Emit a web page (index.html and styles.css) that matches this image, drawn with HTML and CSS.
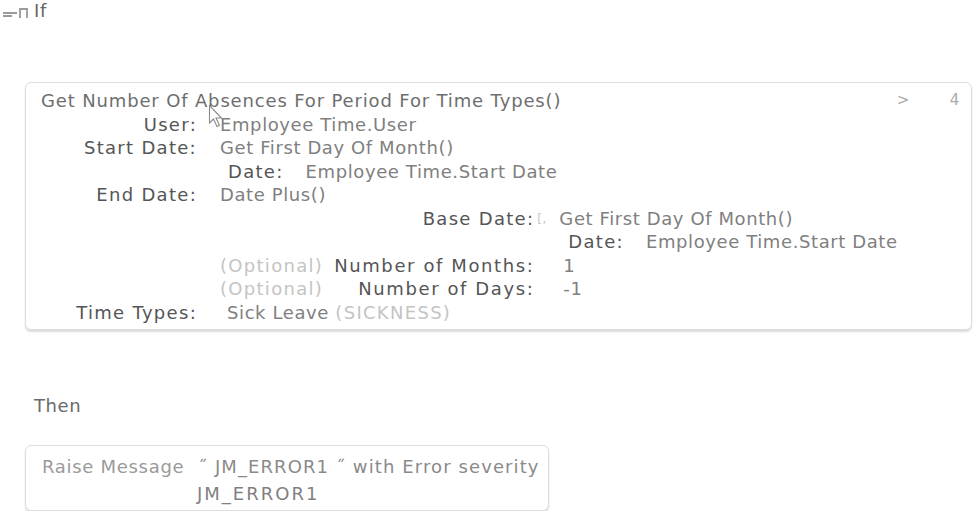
FILE: index.html
```
<!DOCTYPE html>
<html>
<head>
<meta charset="utf-8">
<link rel="stylesheet" href="styles.css">
</head>
<body>
<div class="page">
  <div class="if-head">
    <svg class="collapse" width="28" height="16" viewBox="0 0 28 16"><path d="M1 9 H15 M1 12 H10 M18 14 V5 H25 V14" fill="none" stroke="#9a9a9a" stroke-width="1.8"/></svg>
    <span class="kw">If</span>
  </div>

  <div class="card expr">
    <div class="fn-head">
      <span class="fn">Get Number Of Absences For Period For Time Types()</span>
      <span class="actions"><span class="chev">&gt;</span><span class="num">4</span></span>
    </div>
    <div class="params top">
      <div class="lbl">User:</div>
      <div class="val cursor-host">Employee Time.User
        <svg class="cursor" width="16" height="24" viewBox="0 0 16 24"><path d="M1.5 1.5 V19 L5.5 15 L9 22.5 L11.5 21.3 L8 14 H13.5 Z" fill="#fff" stroke="#8a8a8a" stroke-width="1.1"/></svg>
      </div>

      <div class="lbl">Start Date:</div>
      <div class="val">
        <div>Get First Day Of Month()</div>
        <div class="params nested n1">
          <div class="lbl">Date:</div>
          <div class="val">Employee Time.Start Date</div>
        </div>
      </div>

      <div class="lbl">End Date:</div>
      <div class="val">
        <div>Date Plus()</div>
        <div class="params nested n0">
          <div class="lbl">Base Date:</div>
          <div class="val mark-host"><span class="mark">[,</span>
            <div>Get First Day Of Month()</div>
            <div class="params nested n2">
              <div class="lbl">Date:</div>
              <div class="val">Employee Time.Start Date</div>
            </div>
          </div>

          <div class="lbl opt-row"><span class="opt">(Optional)</span><span class="opt-name">Number of Months:</span></div>
          <div class="val num-val">1</div>

          <div class="lbl opt-row"><span class="opt">(Optional)</span><span class="opt-name">Number of Days:</span></div>
          <div class="val num-val">-1</div>
        </div>
      </div>

      <div class="lbl">Time Types:</div>
      <div class="val tt">Sick Leave <span class="opt">(SICKNESS)</span></div>
    </div>
  </div>

  <div class="then">Then</div>

  <div class="card action">
    <div class="act-line"><span class="act-kw">Raise Message</span><span class="act-val">&nbsp;&nbsp;˝ JM_ERROR1 ˝ with Error severity</span></div>
    <div class="act-line second">JM_ERROR1</div>
  </div>
</div>
</body>
</html>
```
FILE: styles.css
```
* { box-sizing: border-box; }
html, body { margin: 0; padding: 0; background: #fff; }
body {
  font-family: "DejaVu Sans", "Open Sans", sans-serif;
  font-size: 18px;
  letter-spacing: 0.6px;
  color: #777;
}

.if-head {
  display: flex;
  align-items: center;
  height: 22px;
  padding-left: 2px;
  gap: 4px;
}
.collapse { display: block; margin-top: 2px; }
.kw { color: #666; line-height: 22px; }

.card {
  border: 1px solid #dedede;
  border-radius: 6px;
  box-shadow: 0 2px 2px rgba(0,0,0,0.14);
  background: #fff;
}
.expr {
  margin: 60px 2px 0 25px;
  padding: 6px 10px 5px 15px;
  line-height: 23.5px;
}
.fn-head { display: flex; justify-content: space-between; }
.fn { color: #6e6e6e; letter-spacing: 0.85px; }
.actions { display: flex; color: #aaa; font-size: 15px; }
.chev { margin-right: 40px; }
.num { margin-right: 1px; }

.params { display: grid; grid-template-columns: auto 1fr; column-gap: 23px; }
.params.top { grid-template-columns: 156px 1fr; }
.lbl { color: #555; text-align: right; white-space: nowrap; letter-spacing: 1.3px; }
.val { color: #808080; white-space: nowrap; }
.nested { justify-self: start; }
.n1 { margin-left: 8px; column-gap: 22px; }
.n2 { margin-left: 9px; column-gap: 22px; }
.n0 { column-gap: 25px; }
.opt-row { display: flex; justify-content: space-between; gap: 11px; }
.opt-name { letter-spacing: 1.6px; }
.opt { color: #c4c4c4; letter-spacing: 1.3px; }
.num-val { padding-left: 4px; }
.tt { padding-left: 7px; }

.cursor-host, .mark-host { position: relative; }
.cursor { position: absolute; left: -12px; top: -9px; }
.mark { position: absolute; left: -22px; top: 1px; font-size: 12px; color: #c8c8c8; }

.then { margin: 64px 0 0 34px; color: #6a6a6a; line-height: 24px; }

.action {
  width: 524px;
  margin: 27px 0 0 25px;
  padding: 7px 4px 3px 16px;
  line-height: 27px;
}
.act-kw { color: #9a9a9a; letter-spacing: 0.7px; }
.act-val { color: #8a8a8a; letter-spacing: 1.1px; }
.second { padding-left: 155px; color: #808080; letter-spacing: 2px; }
```
